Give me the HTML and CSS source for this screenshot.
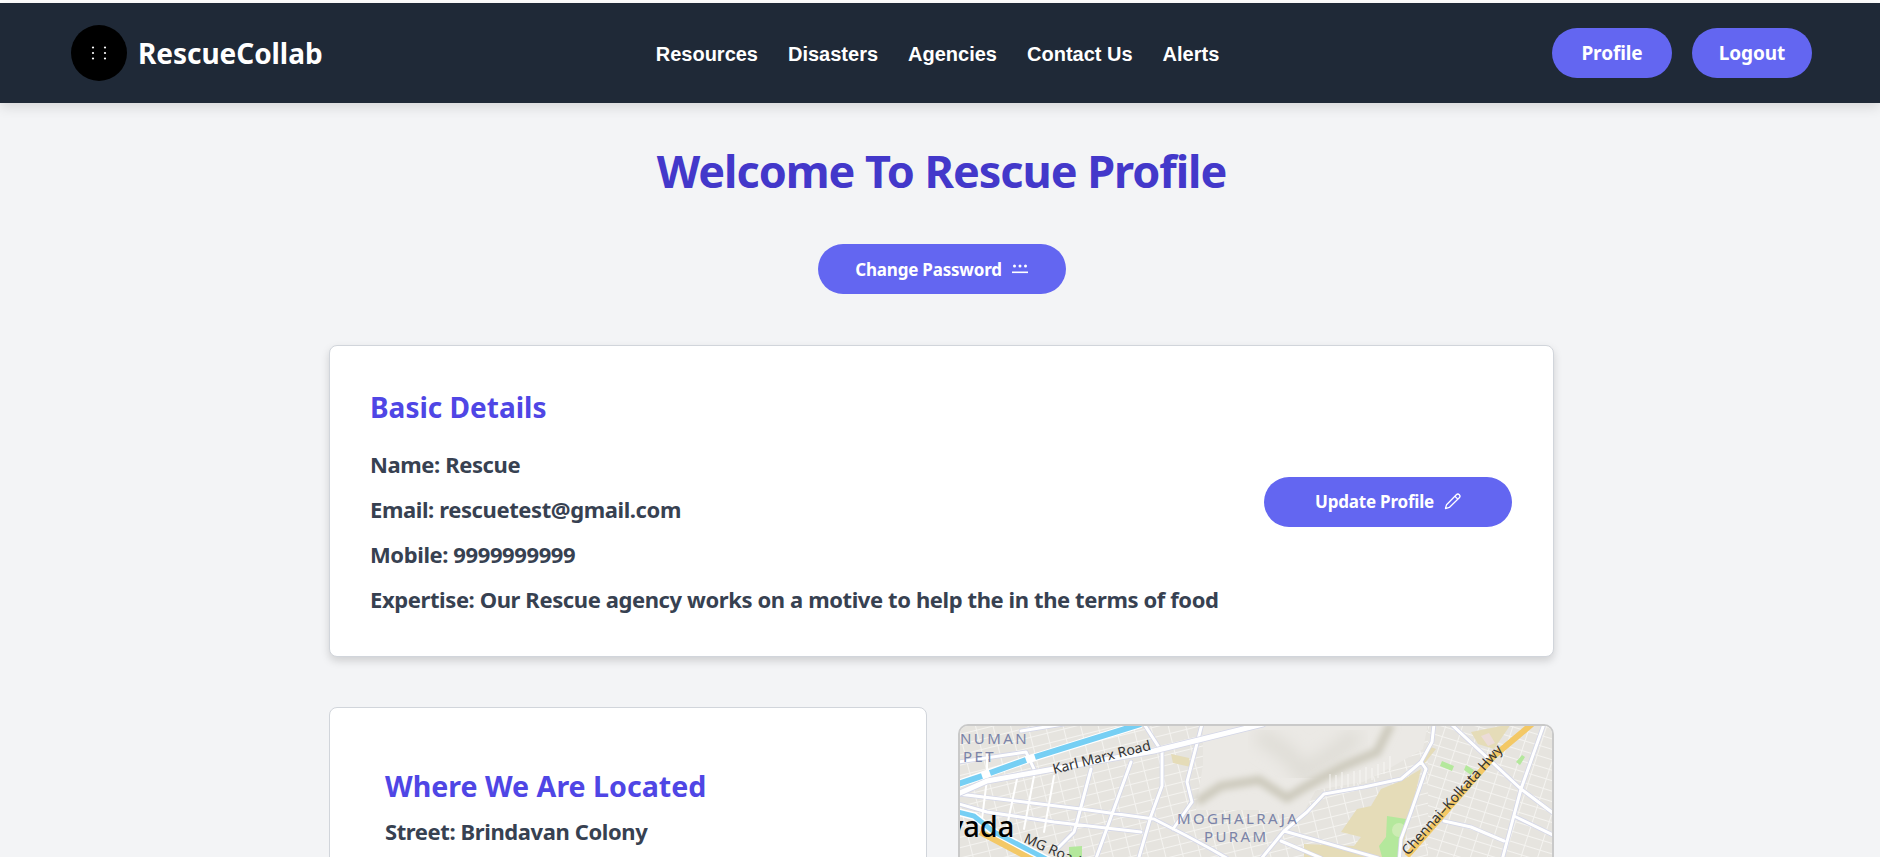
FILE: index.html
```html
<!DOCTYPE html>
<html lang="en">
<head>
    <meta charset="UTF-8">
    <meta name="viewport" content="width=device-width, initial-scale=1.0">
    <title>RescueCollab</title>
    <link rel="stylesheet" href="styles.css">
</head>
<body>
    <header class="navbar">
        <div class="brand">
            <span class="brand-logo">
                <svg width="16" height="16" viewBox="0 0 16 16" fill="#fff">
                    <circle cx="2" cy="2.5" r="1.1"/><circle cx="2" cy="8" r="1.1"/><circle cx="2" cy="13.5" r="1.1"/>
                    <circle cx="14" cy="2.5" r="1.1"/><circle cx="14" cy="8" r="1.1"/><circle cx="14" cy="13.5" r="1.1"/>
                </svg>
            </span>
            <span class="brand-name">RescueCollab</span>
        </div>
        <nav class="nav-links">
            <a href="#">Resources</a>
            <a href="#">Disasters</a>
            <a href="#">Agencies</a>
            <a href="#">Contact Us</a>
            <a href="#">Alerts</a>
        </nav>
        <div class="nav-actions">
            <button class="pill nav-pill">Profile</button>
            <button class="pill nav-pill">Logout</button>
        </div>
    </header>

    <main class="content">
        <h1 class="page-title">Welcome To Rescue Profile</h1>
        <div class="title-action">
            <button class="pill action-pill">Change Password
                <svg width="16" height="12" viewBox="0 0 16 12" fill="#fff">
                    <circle cx="2.5" cy="3" r="1.5"/><circle cx="8" cy="3" r="1.5"/><circle cx="13.5" cy="3" r="1.5"/>
                    <rect x="0" y="8.5" width="16" height="1.6"/>
                </svg>
            </button>
        </div>

        <section class="card details-card">
            <div class="details-text">
                <h2>Basic Details</h2>
                <p>Name: Rescue</p>
                <p>Email: rescuetest@gmail.com</p>
                <p>Mobile: 9999999999</p>
                <p>Expertise: Our Rescue agency works on a motive to help the in the terms of food</p>
            </div>
            <button class="pill action-pill">Update Profile
                <svg width="17" height="17" viewBox="0 0 16 16" fill="none" stroke="#fff" stroke-width="1.2" stroke-linejoin="round">
                    <path d="M11.6 1.6a1.7 1.7 0 0 1 2.8 2.8L5 13.6l-3.6 1 1-3.6z"/>
                    <path d="M10.2 3l2.8 2.8"/>
                </svg>
            </button>
        </section>

        <div class="location-row">
            <section class="card location-card">
                <h2>Where We Are Located</h2>
                <p>Street: Brindavan Colony</p>
            </section>
            <div class="map-box">
                <svg class="map" width="595" height="300" viewBox="0 0 595 300">
                    <defs>
                        <pattern id="streetsA" width="10" height="10" patternUnits="userSpaceOnUse" patternTransform="rotate(-14)">
                            <rect width="10" height="1" fill="#f4f3f0"/>
                        </pattern>
                        <pattern id="streetsB" width="17" height="17" patternUnits="userSpaceOnUse" patternTransform="rotate(76)">
                            <rect width="17" height="1" fill="#f4f3f0"/>
                        </pattern>
                        <pattern id="streetsC" width="10" height="10" patternUnits="userSpaceOnUse" patternTransform="rotate(17)">
                            <rect width="10" height="1" fill="#f4f3f0"/>
                        </pattern>
                        <pattern id="streetsD" width="16" height="16" patternUnits="userSpaceOnUse" patternTransform="rotate(-72)">
                            <rect width="16" height="1" fill="#f4f3f0"/>
                        </pattern>
                        <filter id="soft"><feGaussianBlur stdDeviation="3"/></filter>
                        <filter id="softer"><feGaussianBlur stdDeviation="8"/></filter>
                    </defs>
                    <rect width="595" height="300" fill="#e6e4df"/>
                    <rect width="470" height="300" fill="url(#streetsA)"/>
                    <rect width="470" height="300" fill="url(#streetsB)"/>
                    <rect x="470" width="125" height="300" fill="url(#streetsC)"/>
                    <rect x="470" width="125" height="300" fill="url(#streetsD)"/>

                    <!-- hills -->
                    <path d="M245 0H470L465 25 432 44 405 58 358 66 342 95 300 86 238 86 245 40Z" fill="#ebe9e5"/>
                    <path d="M300 10L330 30 345 50 375 30 400 10" fill="none" stroke="#dedcd5" stroke-width="16" filter="url(#softer)"/>
                    <path d="M239 78L263 62 301 56 329 74 349 62 386 42 419 28 433 0" fill="none" stroke="#cdcabd" stroke-width="9" filter="url(#soft)"/>
                    <path d="M372 66v-16M378 65v-14M384 64v-16M390 63v-13M396 62v-15M402 60v-14M408 59v-16M414 56v-12M420 54v-14M426 50v-12M432 46v-14" stroke="#f7f6f3" stroke-width="1"/>

                    <!-- parks and sand -->
                    <path d="M463 45L443 57 423 65 413 82 399 85 383 108 403 113 396 122 346 120V140H441L453 88Z" fill="#e5dcb8"/>
                    <path d="M466 40L478 25 473 23 463 38Z" fill="#e5dcb8"/>
                    <path d="M213 30l18 4 2 9-18-4Z" fill="#e5dcb8"/>
                    <path d="M513 8L553 0 536 25 520 20Z" fill="#e5dcb8"/>
                    <path d="M523 12l8-3 6 10-7 3Z" fill="#ecdcd8"/>
                    <path d="M429 92L448 95 441 140H426L421 122 428 113Z" fill="#b4e89c"/>
                    <circle cx="441" cy="106" r="7" fill="#cdecb4"/>
                    <path d="M484 37l12 5-2 5-12-5ZM508 41l8 5-3 5-7-5ZM558 38l6-7 3 2-5 8ZM111 123l13-1v14h-13Z" fill="#b4e89c"/>

                    <!-- main roads -->
                    <g fill="none" stroke-linecap="round" stroke-linejoin="round">
                        <path stroke="#d3d6e8" stroke-width="4.6" d="M1 80L29 88 96 98 183 108M1 70L123 85 196 95 229 112 253 125 279 140M186 0L204 28 204 62 193 92 179 140M244 0L229 58 234 78 215 105M133 45L119 98 116 108 99 125M173 38L136 140M476 0L474 18 463 38 443 55 406 63 366 70 349 88 326 107 303 135M463 38L468 45 453 88 443 115 441 140M493 0L563 65 595 89M586 0L563 65 543 140M486 97L513 103 546 117M556 92L595 111M326 107L420 134M323 117L363 134M1 38L68 28 76 45M63 7L106 0"/>
                        <path stroke="#fff" stroke-width="3" d="M1 80L29 88 96 98 183 108M1 70L123 85 196 95 229 112 253 125 279 140M186 0L204 28 204 62 193 92 179 140M244 0L229 58 234 78 215 105M133 45L119 98 116 108 99 125M173 38L136 140M476 0L474 18 463 38 443 55 406 63 366 70 349 88 326 107 303 135M463 38L468 45 453 88 443 115 441 140M493 0L563 65 595 89M586 0L563 65 543 140M486 97L513 103 546 117M556 92L595 111M326 107L420 134M323 117L363 134M1 38L68 28 76 45M63 7L106 0"/>
                        <path stroke="#fff" stroke-width="2" d="M96 52L86 108M59 55L49 102M29 55L24 95M76 52L66 105M29 30L29 55"/>
                        <path stroke="#d3d6e8" stroke-width="6.5" d="M0 70L29 57 96 45 196 27 305 0"/>
                        <path stroke="#fff" stroke-width="5" d="M0 70L29 57 96 45 196 27 305 0"/>
                    </g>

                    <!-- canal and highways -->
                    <path d="M0 60L68 36 183 0" fill="none" stroke="#fff" stroke-width="8"/>
                    <path d="M0 60L24 52M32 49L68 36M77 33L183 0" fill="none" stroke="#76cff4" stroke-width="6"/>
                    <path d="M0 88L16 92 36 108 90 136" fill="none" stroke="#fff" stroke-width="8"/>
                    <path d="M0 88L16 92 36 108 90 136" fill="none" stroke="#76cff4" stroke-width="5"/>
                    <path d="M22 108L75 136" fill="none" stroke="#f3c866" stroke-width="6"/>
                    <path d="M574 0L536 32 449 132" fill="none" stroke="#f3c866" stroke-width="6"/>

                    <!-- labels -->
                    <g class="map-place">
                        <text x="2" y="20">NUMAN</text>
                        <text x="5" y="38">PET</text>
                        <text x="219" y="100">MOGHALRAJA</text>
                        <text x="246" y="118">PURAM</text>
                    </g>
                    <g class="map-road">
                        <text transform="translate(96 50) rotate(-14)">Karl Marx Road</text>
                        <text transform="translate(65 118) rotate(24)">MG Road</text>
                        <text transform="translate(450 132) rotate(-48)">Chennai–Kolkata Hwy</text>
                    </g>
                    <text class="map-city" x="-10" y="113">vada</text>
                </svg>
            </div>
        </div>
    </main>
</body>
</html>
```

FILE: styles.css
```css
* {
    box-sizing: border-box;
}
html {
    height: 100%;
    overflow: hidden;
}
body {
    margin: 0;
    padding-top: 3px;
    height: 100%;
    overflow: hidden;
    background: linear-gradient(#fff 3px, #f3f4f6 3px);
    color: #374151;
    font-family: "Noto Sans", sans-serif;
}
.navbar {
    display: flex;
    justify-content: space-between;
    align-items: center;
    position: relative;
    height: 100px;
    padding: 0 68px 0 71px;
    background: #1f2937;
    box-shadow: 0 4px 12px rgba(0, 0, 0, 0.12);
}
.brand {
    display: flex;
    align-items: center;
    gap: 11px;
    width: 252px;
}
.brand-logo {
    display: flex;
    align-items: center;
    justify-content: center;
    width: 56px;
    height: 56px;
    border-radius: 50%;
    background: #000;
}
.brand-name {
    color: #fff;
    font-size: 28px;
    font-weight: 700;
    letter-spacing: -0.05px;
}
.nav-links {
    display: flex;
    gap: 30px;
    margin-top: 2px;
}
.nav-links a {
    color: #fff;
    font-family: "Liberation Sans", sans-serif;
    font-size: 20px;
    font-weight: 700;
    text-decoration: none;
}
.nav-actions {
    display: flex;
    gap: 20px;
}
.pill {
    border: 0;
    border-radius: 25px;
    background: #6366f1;
    color: #fff;
    font-family: "Noto Sans", sans-serif;
    font-weight: 700;
    cursor: pointer;
}
.nav-pill {
    width: 120px;
    height: 50px;
    font-size: 19px;
    letter-spacing: -0.1px;
}
.action-pill {
    display: flex;
    flex: none;
    align-items: center;
    justify-content: center;
    gap: 10px;
    width: 248px;
    height: 50px;
    font-size: 17px;
    letter-spacing: -0.2px;
}
.content {
    width: 1225px;
    margin-left: 329px;
}
.page-title {
    margin: 33px 0 0;
    color: #4338ca;
    font-size: 45px;
    font-weight: 700;
    line-height: 70px;
    letter-spacing: -1.05px;
    text-align: center;
}
.title-action {
    display: flex;
    justify-content: center;
    margin-top: 38px;
}
.card {
    border: 1px solid #d1d5db;
    border-radius: 8px;
    background: #fff;
}
.card h2 {
    margin: 0;
    color: #4f46e5;
    font-size: 28px;
    font-weight: 700;
    line-height: 40px;
}
.card p {
    margin: 0;
    font-size: 22px;
    font-weight: 700;
    line-height: 45px;
    letter-spacing: -0.4px;
}
.details-card {
    display: flex;
    justify-content: space-between;
    align-items: center;
    height: 312px;
    margin-top: 51px;
    padding: 6px 41px 0 40px;
    box-shadow: 0 4px 8px rgba(0, 0, 0, 0.15);
}
.details-card .action-pill {
    margin-top: -5px;
}
.details-text h2 {
    margin-bottom: 15px;
}
.location-row {
    display: flex;
    align-items: flex-start;
    gap: 31px;
    margin-top: 50px;
}
.location-card {
    width: 598px;
    height: 400px;
    padding: 58px 55px 0;
}
.location-card h2 {
    margin-bottom: 3px;
    font-size: 28.6px;
}
.map-box {
    width: 596px;
    height: 300px;
    margin-top: 17px;
    overflow: hidden;
    border: 2px solid #c9c9c9;
    border-radius: 10px;
}
.map {
    display: block;
    margin: -2px;
}
.map-place text {
    fill: #7a83a8;
    font-family: "Noto Sans", sans-serif;
    font-size: 15px;
    letter-spacing: 2.4px;
}
.map-road text {
    fill: #333;
    font-family: "Noto Sans", sans-serif;
    font-size: 14px;
}
.map-city {
    fill: #000;
    font-family: "Noto Sans", sans-serif;
    font-size: 29px;
    font-weight: 500;
}
```
